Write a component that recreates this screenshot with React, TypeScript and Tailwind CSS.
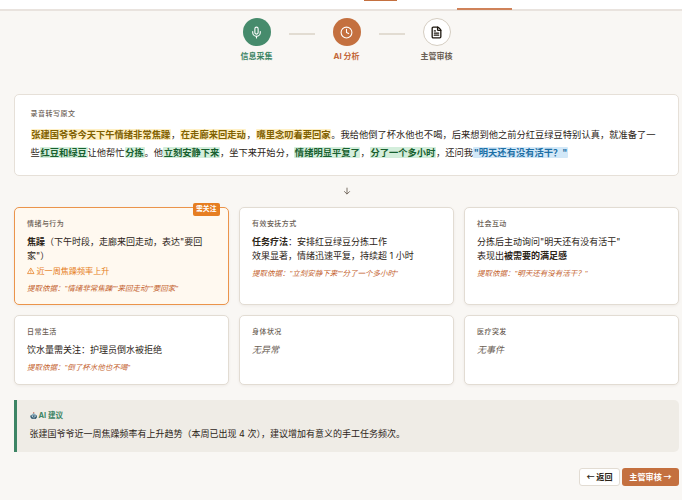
import type { ReactNode } from "react";
import { Clock, FileText, Mic } from "lucide-react";

const Mark = ({ tone, children }: { tone: "amber" | "green" | "blue"; children: ReactNode }) => {
    const tones = {
        amber: "bg-[#fff0c4] text-[#806000]",
        green: "bg-[#d3eedb] text-[#17602f]",
        blue: "bg-[#d2e8f8] text-[#1d6fa5]",
    };
    return <span className={`rounded-[1px] px-[0.7px] font-bold ${tones[tone]}`}>{children}</span>;
};

const Step = ({ icon, label, circle, text }: { icon: ReactNode; label: string; circle: string; text: string }) => (
    <div className="flex w-[50px] flex-col items-center">
        <div className={`flex size-[28px] items-center justify-center rounded-full ${circle}`}>{icon}</div>
        <span className={`mt-[4px] text-[8px] leading-[12px] font-bold whitespace-nowrap ${text}`}>{label}</span>
    </div>
);

const Connector = () => <div className="mx-[7px] mt-[15px] h-[2px] w-[26px] bg-[#e2dcd2]" />;

type CardProps = { title: string; children: ReactNode; evidence?: string; badge?: string };

const Card = ({ title, children, evidence, badge }: CardProps) => (
    <div
        className={`relative rounded-[5px] border px-[12px] pt-[10px] shadow-[0_1px_3px_rgba(60,40,20,0.06)] ${
            badge ? "border-[#eb944b] bg-[#fff9f0]" : "border-[#e2dcd3] bg-white"
        }`}
    >
        {badge && (
            <span className="absolute -top-[5px] right-[8.5px] flex h-[13px] w-[26.5px] items-center justify-center rounded-[2px] bg-[#e67e22] text-[6.8px] font-bold whitespace-nowrap text-white">
                {badge}
            </span>
        )}
        <h3 className="mb-[5.5px] text-[7px] leading-[11px] font-medium tracking-[0.45px] text-[#6b6055]">{title}</h3>
        <div className="text-[9px] leading-[14.5px] whitespace-nowrap text-[#2c2417]">{children}</div>
        {evidence && (
            <p className="mt-[4.5px] font-['Liberation_Sans','Noto_Sans_CJK_SC',sans-serif] text-[7.5px] leading-[12px] whitespace-nowrap text-[#c4622d] italic">
                提取依据：{evidence}
            </p>
        )}
    </div>
);

const WarningIcon = () => (
    <svg viewBox="0 0 16 16" className="mr-[2px] size-[7.5px]" fill="none" stroke="currentColor" strokeWidth="1.6">
        <path d="M8 2 15 14H1Z" strokeLinejoin="round" />
        <path d="M8 6v4M8 11.2v1.4" />
    </svg>
);

const RobotIcon = () => (
    <svg viewBox="0 0 16 16" className="mr-[1.5px] size-[7.5px]">
        <path d="M7.3 1h1.4v4H7.3z" fill="#6e7f88" />
        <circle cx="8" cy="1.8" r="1.4" fill="#e0563f" />
        <path d="M3 8a5 4.6 0 0 1 10 0Z" fill="#8fb0bf" />
        <rect x="0.5" y="7" width="15" height="5" rx="1.6" fill="#4a7288" />
        <path d="M2.2 10h11.6v2.4a2.4 2.4 0 0 1-2.4 2.4H4.6a2.4 2.4 0 0 1-2.4-2.4Z" fill="#31566c" />
        <circle cx="5.2" cy="9" r="1.3" fill="#e8f4f8" />
        <circle cx="10.8" cy="9" r="1.3" fill="#e8f4f8" />
        <path d="M5 12h6v1.3H5z" fill="#d9e3e8" />
    </svg>
);

const App = () => {
    return (
        <div
            lang="zh-CN"
            className="h-[500px] w-[682px] overflow-hidden bg-[#f9f7f4] font-['Inter','Noto_Sans_CJK_SC',sans-serif] text-[#2c2417]"
        >
            <header className="flex h-[11px] items-start border-b-2 border-[#e9e3de] bg-white">
                <div className="ml-[364px] h-px w-[33px] bg-[#c4703f]" />
                <div className="mt-[8px] ml-[59.5px] h-[2px] w-[55.5px] bg-[#cf8259]" />
            </header>

            <div className="flex justify-center pt-[7px] pl-[11px]">
                <Step
                    icon={<Mic className="size-[13px] text-white" strokeWidth={2} />}
                    label="信息采集"
                    circle="bg-[#468b6c]"
                    text="text-[#3d8565]"
                />
                <Connector />
                <Step
                    icon={<Clock className="size-[13px] text-white" strokeWidth={2} />}
                    label="AI 分析"
                    circle="bg-[#c4703f]"
                    text="text-[#c4673a]"
                />
                <Connector />
                <Step
                    icon={<FileText className="size-[13px] text-[#1c160e]" strokeWidth={2.4} />}
                    label="主管审核"
                    circle="border border-[#d5cdc1] bg-white"
                    text="text-[#6b6055]"
                />
            </div>

            <main className="pr-[3px] pl-[14px]">
                <section className="mt-[32px] h-[82px] rounded-[5px] border border-[#e6e0d8] bg-white px-[15.5px] pt-[13px]">
                    <h2 className="text-[7px] leading-[12px] font-medium tracking-[0.5px] text-[#6b6055]">录音转写原文</h2>
                    <p className="mt-[6px] text-[9.27px] leading-[18.2px] whitespace-nowrap">
                        <Mark tone="amber">张建国爷爷今天下午情绪非常焦躁</Mark>，<Mark tone="amber">在走廊来回走动</Mark>，
                        <Mark tone="amber">嘴里念叨着要回家</Mark>
                        。我给他倒了杯水他也不喝，后来想到他之前分红豆绿豆特别认真，就准备了一
                        <br />些<Mark tone="green">红豆和绿豆</Mark>让他帮忙<Mark tone="green">分拣</Mark>。他
                        <Mark tone="green">立刻安静下来</Mark>，坐下来开始分，<Mark tone="green">情绪明显平复了</Mark>，
                        <Mark tone="green">分了一个多小时</Mark>，还问我<Mark tone="blue">"明天还有没有活干？"</Mark>
                    </p>
                </section>

                <div className="flex h-[31px] items-center justify-center pb-[2px]">
                    <svg viewBox="0 0 8 8" className="size-[8px]" fill="none" stroke="#6b6055" strokeWidth="0.9">
                        <path d="M4 .7v6.4M1.2 4.3 4 7.1l2.8-2.8" />
                    </svg>
                </div>

                <section className="grid grid-cols-3 grid-rows-[98px_70px] gap-[10px]">
                    <Card title="情绪与行为" badge="需关注" evidence={'"情绪非常焦躁""来回走动""要回家"'}>
                        <strong>焦躁</strong>（下午时段，走廊来回走动，表达"要回
                        <br />
                        家"）
                        <div className="flex items-center text-[8.1px] text-[#e67e22]">
                            <WarningIcon />
                            近一周焦躁频率上升
                        </div>
                    </Card>
                    <Card title="有效安抚方式" evidence={'"立刻安静下来""分了一个多小时"'}>
                        <strong>任务疗法</strong>：安排红豆绿豆分拣工作
                        <br />
                        效果显著，情绪迅速平复，持续超 1 小时
                    </Card>
                    <Card title="社会互动" evidence={'"明天还有没有活干？"'}>
                        分拣后主动询问"明天还有没有活干"
                        <br />
                        表现出<strong>被需要的满足感</strong>
                    </Card>
                    <Card title="日常生活" evidence={'"倒了杯水他也不喝"'}>
                        饮水量需关注：护理员倒水被拒绝
                    </Card>
                    <Card title="身体状况">
                        <span className="text-[#6b6055] italic">无异常</span>
                    </Card>
                    <Card title="医疗突发">
                        <span className="text-[#6b6055] italic">无事件</span>
                    </Card>
                </section>

                <section className="mt-[15px] h-[52px] rounded-r-[5px] border-l-[3px] border-[#3d8565] bg-[#efece6] pt-[10px] pl-[12.5px]">
                    <h3 className="flex items-center text-[7.5px] leading-[12px] font-bold text-[#3d8565]">
                        <RobotIcon />
                        AI 建议
                    </h3>
                    <p className="mt-[4px] text-[9px] leading-[15px] whitespace-nowrap">
                        张建国爷爷近一周焦躁频率有上升趋势（本周已出现 4 次），建议增加有意义的手工任务频次。
                    </p>
                </section>

                <div className="mt-[16px] flex justify-end gap-[2px] font-['Noto_Sans_CJK_SC',sans-serif] text-[8.1px] font-bold whitespace-nowrap">
                    <button className="flex h-[18px] w-[41px] items-center justify-center rounded-[3px] border border-[#e2dcd3] bg-white">
                        ← 返回
                    </button>
                    <button className="flex h-[18px] w-[57px] items-center justify-center rounded-[3px] bg-[#c4703f] text-white">
                        主管审核 →
                    </button>
                </div>
            </main>
        </div>
    );
};

export default App;
